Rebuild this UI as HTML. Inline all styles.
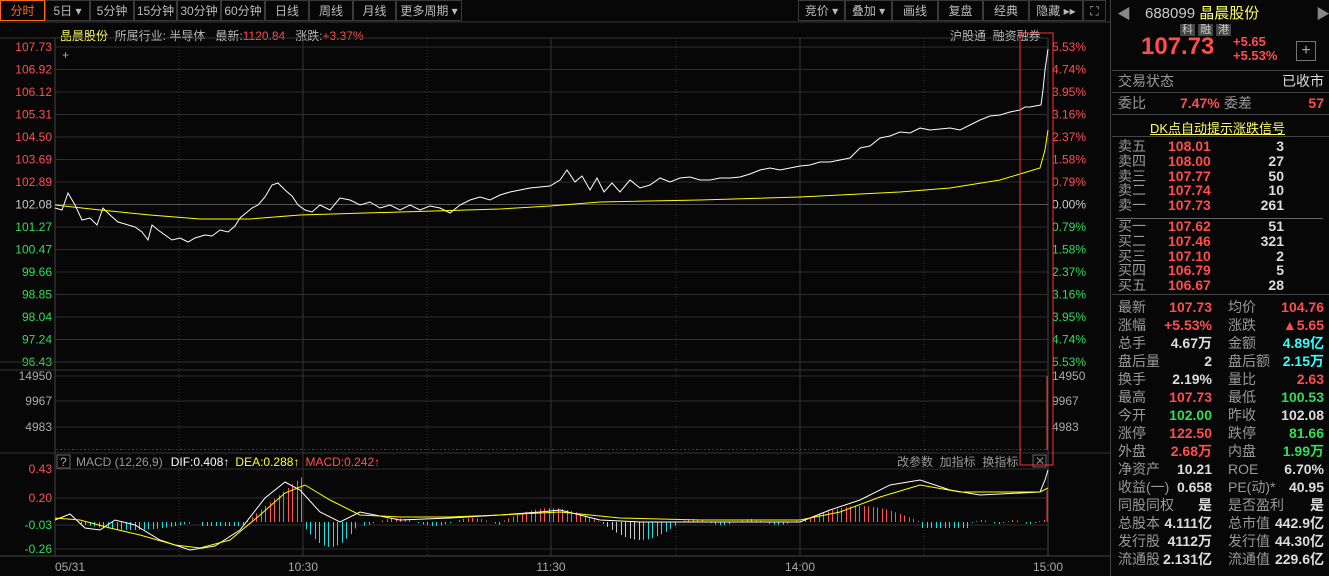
<!DOCTYPE html>
<html><head><meta charset="utf-8">
<style>
*{margin:0;padding:0;box-sizing:border-box}
body{width:1329px;height:576px;background:#070707;overflow:hidden;position:relative;font-family:"Liberation Sans","Noto Sans CJK SC",sans-serif;color:#bbb;font-size:12px}
.a{position:absolute;white-space:nowrap}
.tab{position:absolute;top:0;height:21px;border:1px solid #3a3a3a;color:#bbb;font-size:12px;line-height:20px;text-align:center}
.r{color:#ff4d4d}.g{color:#33dd55}.y{color:#ffff66}.c{color:#33ffff}.w{color:#ddd}.gr{color:#999}
.rp{position:absolute;left:1112px;width:217px}
.row{position:absolute;left:1118px;width:206px;height:18px;font-size:14px;line-height:18px}
.row span{position:absolute}
</style></head><body>
<div class="tab" style="left:0;width:45px;color:#ff6a1a;border-color:#ff6a1a">分时</div>
<div class="tab" style="left:45px;width:45px">5日 ▾</div>
<div class="tab" style="left:90px;width:44px">5分钟</div>
<div class="tab" style="left:134px;width:43px">15分钟</div>
<div class="tab" style="left:177px;width:44px">30分钟</div>
<div class="tab" style="left:221px;width:44px">60分钟</div>
<div class="tab" style="left:265px;width:44px">日线</div>
<div class="tab" style="left:309px;width:44px">周线</div>
<div class="tab" style="left:353px;width:43px">月线</div>
<div class="tab" style="left:396px;width:66px">更多周期 ▾</div>
<div class="tab" style="left:798px;width:47px">竞价 ▾</div>
<div class="tab" style="left:845px;width:47px">叠加 ▾</div>
<div class="tab" style="left:892px;width:46px">画线</div>
<div class="tab" style="left:938px;width:45px">复盘</div>
<div class="tab" style="left:983px;width:46px">经典</div>
<div class="tab" style="left:1029px;width:54px">隐藏 ▸▸</div>
<div class="tab" style="left:1083px;width:23px">⛶</div>
<div class="a" style="left:60px;top:27px;font-size:12px"><span class="y">晶晨股份</span>&nbsp; 所属行业: 半导体 &nbsp; 最新:<span class="r">1120.84</span> &nbsp; 涨跌:<span class="r">+3.37%</span></div>
<div class="a" style="left:950px;top:27px">沪股通 &nbsp;融资融券</div>
<svg class="a" style="left:0;top:0" width="1110" height="576" id="ch"></svg>
<div style="position:absolute;left:1110px;top:0;width:1px;height:576px;background:#444"></div>
<div class="a" style="left:1117px;top:4px;color:#888;font-size:14px">◀</div>
<div class="a" style="left:1316px;top:4px;color:#888;font-size:14px">▶</div>
<div class="a" style="left:1145px;top:2px;font-size:15px"><span style="color:#ccc">688099</span> <span class="y">晶晨股份</span></div>
<div class="a" style="left:1180px;top:21px;font-size:11px;color:#ccc"><span style="background:#444;padding:0 2px">科</span> <span style="background:#444;padding:0 2px">融</span> <span style="background:#444;padding:0 2px">港</span></div>
<div class="a r" style="left:1141px;top:33px;font-size:24px;font-weight:bold">107.73</div>
<div class="a r" style="left:1233px;top:35px;font-size:13px;font-weight:bold;line-height:14px">+5.65<br>+5.53%</div>
<div class="a" style="left:1296px;top:41px;width:20px;height:20px;border:1px solid #777;color:#aaa;text-align:center;line-height:18px;font-size:16px">+</div>
<div class="rp" style="top:70px;height:1px;background:#444"></div>
<div class="row" style="top:72px"><span class="gr" style="left:0">交易状态</span><span class="w" style="right:0">已收市</span></div>
<div class="rp" style="top:92px;height:1px;background:#444"></div>
<div class="row" style="top:94px"><span class="gr" style="left:0">委比</span><span class="r" style="left:62px;font-weight:bold">7.47%</span><span class="gr" style="left:106px">委差</span><span class="r" style="right:0;font-weight:bold">57</span></div>
<div class="rp" style="top:114px;height:1px;background:#444"></div>
<div class="a y" style="left:1150px;top:118px;font-size:13px;text-decoration:underline">DK点自动提示涨跌信号</div>
<div class="rp" style="top:136px;height:1px;background:#444"></div>
<div class="rp" style="top:218px;left:1116px;width:207px;height:1px;background:#666"></div>
<div class="rp" style="top:294px;height:1px;background:#444"></div>
<div id="rows"></div>
<script>
var ob=[["卖五","108.01","3"],["卖四","108.00","27"],["卖三","107.77","50"],["卖二","107.74","10"],["卖一","107.73","261"],["买一","107.62","51"],["买二","107.46","321"],["买三","107.10","2"],["买四","106.79","5"],["买五","106.67","28"]];
var h="";
ob.forEach(function(o,i){var t=139+i*14.8+(i>=5?6:0);
h+='<div class="row" style="top:'+t+'px;height:15px;line-height:15px"><span class="gr" style="left:0">'+o[0]+'</span><span class="r" style="left:50px;font-weight:bold">'+o[1]+'</span><span class="w" style="left:100px;width:66px;text-align:right;font-weight:bold">'+o[2]+'</span></div>';});
var st=[["最新","107.73","r","均价","104.76","r"],["涨幅","+5.53%","r","涨跌","▲5.65","r"],["总手","4.67万","w","金额","4.89亿","c"],["盘后量","2","w","盘后额","2.15万","c"],["换手","2.19%","w","量比","2.63","r"],["最高","107.73","r","最低","100.53","g"],["今开","102.00","g","昨收","102.08","w"],["涨停","122.50","r","跌停","81.66","g"],["外盘","2.68万","r","内盘","1.99万","g"],["净资产","10.21","w","ROE","6.70%","w"],["收益(一)","0.658","w","PE(动)*","40.95","w"],["同股同权","是","w","是否盈利","是","w"],["总股本","4.111亿","w","总市值","442.9亿","w"],["发行股","4112万","w","发行值","44.30亿","w"],["流通股","2.131亿","w","流通值","229.6亿","w"]];
st.forEach(function(o,i){var t=298+i*18;
h+='<div class="row" style="top:'+t+'px"><span class="gr" style="left:0">'+o[0]+'</span><span class="'+o[2]+'" style="right:112px;font-weight:bold">'+o[1]+'</span><span class="gr" style="left:110px">'+o[3]+'</span><span class="'+o[5]+'" style="right:0;font-weight:bold">'+o[4]+'</span></div>';});
document.getElementById("rows").innerHTML=h;

var S='';
function L(x1,y1,x2,y2,c,d){S+='<line x1="'+x1+'" y1="'+y1+'" x2="'+x2+'" y2="'+y2+'" stroke="'+c+'"'+(d?' stroke-dasharray="1,2"':'')+'/>';}
function T(x,y,s,c,a){S+='<text x="'+x+'" y="'+y+'" fill="'+c+'" font-size="12"'+(a?' text-anchor="'+a+'"':'')+'>'+s+'</text>';}
L(0,22,1110,22,"#3a3a3a");
var X0=55,X1=1048;
L(X0,38,X0,556,"#444");L(X1,38,X1,556,"#444");
var pl=["107.73","106.92","106.12","105.31","104.50","103.69","102.89","102.08","101.27","100.47","99.66","98.85","98.04","97.24","96.43"];
var pr=["5.53%","4.74%","3.95%","3.16%","2.37%","1.58%","0.79%","0.00%","0.79%","1.58%","2.37%","3.16%","3.95%","4.74%","5.53%"];
for(var i=0;i<15;i++){var y=47+i*22.5;L(X0,y,X1,y,i==7?"#555":"#2e2e2e");var c=i<7?"#ff5050":(i==7?"#ccc":"#33dd55");T(52,y+4,pl[i],c,"end");T(1052,y+4,pr[i],c);}
L(0,38,X1,38,"#333");
[376,401,427].forEach(function(y,k){L(X0,y,X1,y,"#2e2e2e");T(52,y+4,["14950","9967","4983"][k],"#aaa","end");T(1052,y+4,["14950","9967","4983"][k],"#aaa");});
L(0,362,X1,362,"#333");L(0,370,X1,370,"#333");
L(0,453,1110,453,"#333");
[[469,"0.43","#ff5050"],[498,"0.20","#ff5050"],[525,"-0.03","#33dd55"],[549,"-0.26","#33dd55"]].forEach(function(a){L(X0,a[0],X1,a[0],"#2e2e2e");T(52,a[0]+4,a[1],a[2],"end");});
L(0,556,1110,556,"#444");
[179,427,676,924].forEach(function(x){L(x,38,x,556,"#333",1);});
[303,551,800].forEach(function(x){L(x,38,x,556,"#333");});
T(55,571,"05/31","#aaa");T(303,571,"10:30","#aaa","middle");T(551,571,"11:30","#aaa","middle");T(800,571,"14:00","#aaa","middle");T(1048,571,"15:00","#aaa","middle");
T(62,59,"+","#aaa");
S+='<rect x="57" y="455" width="13" height="13" fill="none" stroke="#666"/>';T(60,466,"?","#aaa");
S+='<text x="76" y="466" font-size="12"><tspan fill="#999">MACD (12,26,9)</tspan><tspan fill="#fff" dx="8">DIF:0.408↑</tspan><tspan fill="#ffff33" dx="6">DEA:0.288↑</tspan><tspan fill="#ff5050" dx="6">MACD:0.242↑</tspan></text>';
T(897,466,"改参数 &#160;加指标 &#160;换指标","#999");
S+='<rect x="1033" y="455" width="13" height="12" fill="none" stroke="#666"/>';T(1035,465,"✕","#888");
var p="55,208 62,210 68,193 75,205 82,220 90,218 97,225 103,208 110,215 118,222 125,224 135,227 142,232 148,240 152,225 158,230 165,235 172,240 180,238 188,242 195,238 205,235 212,236 220,230 228,232 235,226 240,218 246,213 252,208 258,205 265,197 272,185 278,183 285,190 292,196 298,205 305,210 312,212 320,205 330,210 340,198 350,200 360,205 370,202 380,208 390,205 400,210 410,205 420,210 430,206 440,208 450,213 460,205 470,200 480,197 490,200 500,195 510,192 520,190 530,188 540,187 550,186 560,180 567,170 575,182 582,176 590,190 597,178 604,192 612,183 620,192 630,180 640,188 650,185 660,178 670,182 680,178 690,177 700,180 710,180 720,178 730,178 740,177 750,174 760,170 770,168 780,170 790,168 800,166 810,165 820,162 830,162 840,160 850,158 860,148 870,146 880,138 890,136 900,132 910,133 920,128 930,130 940,129 950,128 960,130 970,125 980,120 990,116 1000,115 1010,112 1020,110 1025,107 1030,107 1035,106 1041,105 1043,90 1045,70 1048,49";
S+='<polyline points="'+p+'" fill="none" stroke="#fff" stroke-width="1"/>';
S+='<polyline points="55,205 100,210 150,215 200,219 250,219 300,215 400,212 500,209 550,206 600,202 700,200 800,197 900,192 950,188 1000,180 1040,168 1045,150 1048,130" fill="none" stroke="#ffff00" stroke-width="1"/>';
for(var x=57;x<1046;x+=4){L(x,449,x,450,(x%12==1)?"#33cc44":"#cc3333");}
L(1047,376,1047,450,"#ff4040");
var z=522;
function m(x){var v=0;
if(x<200)v=-8*Math.sin((x-70)/40)*(x>80?1:-0.3);
else if(x<245)v=-4;
else if(x<305)v=Math.max(0,(x-245)/60)*48;
else if(x<360)v=-25*Math.sin((x-300)/60*3.14);
else if(x<500)v=Math.sin(x/12)*4;
else if(x<600)v=14*Math.sin((x-500)/100*3.14);
else if(x<680)v=-18*Math.sin((x-600)/80*3.14);
else if(x<800)v=Math.sin(x/9)*3;
else if(x<920)v=16*Math.sin((x-800)/120*3.14);
else if(x<970)v=-6;else v=Math.sin(x/5)*2;return v;}
for(var x=58;x<1045;x+=4.5){var xx=Math.round(x)+0.5;var v=m(x);if(Math.abs(v)<0.8)continue;L(xx,z,xx,z-v,v>0?"#ff5555":(x>580&&x<640?"#ccc":"#22dddd"));}
L(1047,490,1047,522,"#ff4040");
S+='<polyline points="55,520 70,514 85,528 100,530 115,520 135,525 160,540 190,550 215,546 240,530 265,498 285,482 300,490 320,512 340,522 360,512 400,520 450,518 500,515 540,512 560,510 600,520 640,522 700,522 760,522 800,522 830,510 860,500 890,485 920,480 950,490 980,495 1040,492 1045,480 1048,470" fill="none" stroke="#fff"/>';
S+='<polyline points="55,518 80,520 110,528 140,535 175,545 200,548 230,540 260,515 285,493 305,485 330,500 360,515 400,517 450,517 500,515 560,512 620,518 700,520 800,520 840,512 880,497 920,485 960,492 1000,492 1040,492 1048,488" fill="none" stroke="#ffff00"/>';
S+='<rect x="1020" y="33" width="33" height="432" fill="none" stroke="#ff3030"/>';
document.getElementById("ch").innerHTML=S;
</script>
</body></html>
